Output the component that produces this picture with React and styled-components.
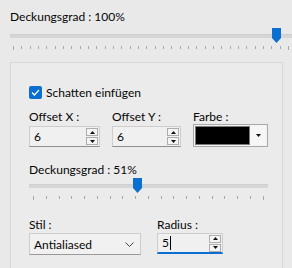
import styled, { createGlobalStyle } from "styled-components";

const GlobalStyle = createGlobalStyle`
  html, body {
    margin: 0;
    padding: 0;
    background: #e9e9e9;
  }
  body {
    font-family: Lato, "Noto Sans", sans-serif;
    font-size: 12px;
    color: #050505;
  }
`;

const Page = styled.div`
  width: 292px;
  height: 268px;
  overflow: hidden;
  padding: 9px 0 0 10px;
  box-sizing: border-box;
`;

const Label = styled.div`
  line-height: 16px;
  height: 16px;
  white-space: nowrap;
  margin-bottom: ${(p) => p.$gap || 0}px;
`;

const SliderWrap = styled.div`
  position: relative;
  width: ${(p) => p.$width}px;
  height: 24px;
`;

const Track = styled.div`
  position: absolute;
  left: 0;
  right: 0;
  top: ${(p) => p.$top}px;
  height: 3px;
  background: #d6d6d6;
  border-top: 1px solid #cfcfcf;
`;

const Thumb = styled.svg`
  position: absolute;
  top: ${(p) => p.$top}px;
  width: 9px;
  height: 15px;
`;

const Ticks = styled.div`
  position: absolute;
  left: ${(p) => p.$inset}px;
  right: ${(p) => p.$inset}px;
  top: ${(p) => p.$top}px;
  display: flex;
  justify-content: space-between;
`;

const Tick = styled.span`
  width: 1px;
  height: ${(p) => (p.$long ? 4 : 3)}px;
  background: #a8a8a8;
`;

function Slider({ width, value, ticks, trackTop, tickInset }) {
  const left = Math.round(((width - 9) * value) / 100);
  return (
    <SliderWrap $width={width}>
      <Track $top={trackTop} />
      <Ticks $inset={tickInset} $top={trackTop + 12}>
        {Array.from({ length: ticks }).map((_, i) => (
          <Tick key={i} $long={i === 0 || i === ticks - 1} />
        ))}
      </Ticks>
      <Thumb $top={trackTop - 6} style={{ left }} viewBox="0 0 9 15">
        <path d="M0 0H9V10L4.5 15L0 10Z" fill="#0a6fd1" />
      </Thumb>
    </SliderWrap>
  );
}

const Panel = styled.div`
  margin-top: 11px;
  width: 273px;
  height: 230px;
  border: 1px solid #d8d8d8;
  background: #ebebeb;
  padding: 21px 0 0 18px;
  box-sizing: border-box;
`;

const CheckRow = styled.label`
  display: flex;
  align-items: center;
  gap: 4px;
  height: 16px;
  margin-bottom: 9px;
`;

const CheckBox = styled.span`
  width: 13px;
  height: 13px;
  border-radius: 2px;
  background: #0a6fd1;
  display: flex;
  align-items: center;
  justify-content: center;
`;

const Row = styled.div`
  display: flex;
  gap: ${(p) => p.$gap}px;
  margin-bottom: ${(p) => p.$after || 0}px;
`;

const Field = styled.div`
  display: flex;
  flex-direction: column;
  gap: ${(p) => (p.$tight ? 0 : 1)}px;
`;

const Spin = styled.div`
  width: ${(p) => p.$width}px;
  height: 21px;
  box-sizing: border-box;
  background: #f0f0f0;
  border: 1px solid #cdcdcd;
  border-bottom: ${(p) => (p.$focus ? "2px solid #0a6fd1" : "1px solid #8f8f8f")};
  display: flex;
  align-items: center;
  justify-content: space-between;
  padding: 0 1px 0 4px;
`;

const Value = styled.span`
  display: flex;
  align-items: center;
  line-height: 16px;
`;

const Caret = styled.span`
  width: 1px;
  height: 14px;
  background: #000;
  margin-left: 1px;
`;

const SpinButtons = styled.div`
  display: flex;
  flex-direction: column;
  gap: 1px;
`;

const SpinButton = styled.div`
  width: 12px;
  height: 8px;
  box-sizing: border-box;
  border: 1px solid #adadad;
  background: #f4f4f4;
  display: flex;
  align-items: center;
  justify-content: center;
`;

const Arrow = ({ up }) => (
  <svg width="5" height="3" viewBox="0 0 5 3">
    <path d={up ? "M2.5 0L5 3H0Z" : "M0 0H5L2.5 3Z"} fill="#111" />
  </svg>
);

function SpinBox({ width, value, focus }) {
  return (
    <Spin $width={width} $focus={focus}>
      <Value>
        {value}
        {focus && <Caret />}
      </Value>
      <SpinButtons>
        <SpinButton>
          <Arrow up />
        </SpinButton>
        <SpinButton>
          <Arrow />
        </SpinButton>
      </SpinButtons>
    </Spin>
  );
}

const ColorPicker = styled.div`
  width: 75px;
  height: 23px;
  box-sizing: border-box;
  border: 1px solid #a9a9a9;
  background: #f2f2f2;
  display: flex;
  padding: 1px;
  margin-top: -2px;
`;

const Swatch = styled.div`
  flex: 1;
  background: #000;
  border: 1px solid #7a7a7a;
`;

const SwatchDrop = styled.div`
  width: 16px;
  display: flex;
  align-items: center;
  justify-content: center;
  background: #f6f6f6;
`;

const Select = styled.div`
  width: 112px;
  height: 22px;
  box-sizing: border-box;
  border: 1px solid #cdcdcd;
  border-bottom-color: #9a9a9a;
  background: #f1f1f1;
  display: flex;
  align-items: center;
  justify-content: space-between;
  padding: 0 6px 0 4px;
`;

export default function App() {
  return (
    <>
      <GlobalStyle />
      <Page>
        <Label $gap={2}>Deckungsgrad : 100%</Label>
        <Slider width={282} value={96} ticks={34} trackTop={7} tickInset={3} />
        <Panel>
          <CheckRow>
            <CheckBox>
              <svg width="9" height="7" viewBox="0 0 9 7">
                <path d="M1 3.5L3.4 6L8 1" stroke="#fff" strokeWidth="1.2" fill="none" />
              </svg>
            </CheckBox>
            Schatten einfügen
          </CheckRow>
          <Row $gap={12} $after={15}>
            <Field>
              <Label>Offset X :</Label>
              <SpinBox width={71} value="6" />
            </Field>
            <Field>
              <Label>Offset Y :</Label>
              <SpinBox width={69} value="6" />
            </Field>
            <Field>
              <Label>Farbe :</Label>
              <ColorPicker>
                <Swatch />
                <SwatchDrop>
                  <Arrow />
                </SwatchDrop>
              </ColorPicker>
            </Field>
          </Row>
          <Label $gap={-1}>Deckungsgrad : 51%</Label>
          <Row $gap={0} $after={16}>
            <Slider width={239} value={45} ticks={19} trackTop={7} tickInset={4} />
          </Row>
          <Row $gap={16}>
            <Field $tight>
              <Label>Stil :</Label>
              <Select>
                Antialiased
                <svg width="9" height="5" viewBox="0 0 9 5">
                  <path d="M0.5 0.5L4.5 4.5L8.5 0.5" stroke="#444" fill="none" />
                </svg>
              </Select>
            </Field>
            <Field $tight>
              <Label>Radius :</Label>
              <SpinBox width={66} value="5" focus />
            </Field>
          </Row>
        </Panel>
      </Page>
    </>
  );
}
